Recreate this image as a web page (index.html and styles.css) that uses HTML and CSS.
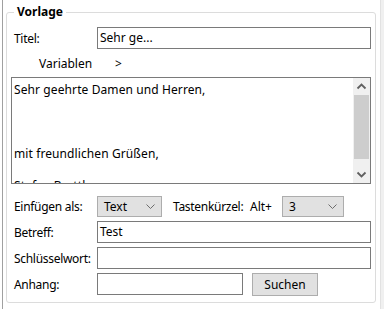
FILE: index.html
```html
<!DOCTYPE html>
<html lang="de">
<head>
  <meta charset="UTF-8">
  <title>Vorlage</title>
  <link rel="stylesheet" href="styles.css">
</head>
<body>
  <div class="window">
    <div class="edge-left"></div>
    <div class="panel">
      <fieldset class="group">
        <legend>Vorlage</legend>

        <div class="row">
          <label>Titel:</label>
          <div class="field">Sehr ge...</div>
        </div>

        <div class="vars">
          <span class="vars-label">Variablen</span>
          <span class="vars-arrow">&gt;</span>
        </div>

        <div class="memo">
          <div class="memo-text">
            Sehr geehrte Damen und Herren,<br><br><br><br>mit freundlichen Grüßen,<br><br>Stefan Brettl
          </div>
          <div class="scrollbar">
            <div class="sb-btn">
              <svg width="17" height="17" viewBox="0 0 17 17"><polyline points="4.5,10.5 8.5,6.5 12.5,10.5" fill="none" stroke="#606060" stroke-width="1.8"/></svg>
            </div>
            <div class="sb-thumb"></div>
            <div class="sb-track"></div>
            <div class="sb-btn">
              <svg width="17" height="17" viewBox="0 0 17 17"><polyline points="4.5,6.5 8.5,10.5 12.5,6.5" fill="none" stroke="#606060" stroke-width="1.8"/></svg>
            </div>
          </div>
        </div>

        <div class="row insert-row">
          <label>Einfügen als:</label>
          <div class="combo combo-kind">
            <span>Text</span>
            <svg width="9" height="5" viewBox="0 0 9 5"><polyline points="0.5,0.5 4.5,4.5 8.5,0.5" fill="none" stroke="#6d6d6d" stroke-width="1"/></svg>
          </div>
          <span class="hotkey-label">Tastenkürzel:</span>
          <span class="alt-label">Alt+</span>
          <div class="combo combo-key">
            <span>3</span>
            <svg width="9" height="5" viewBox="0 0 9 5"><polyline points="0.5,0.5 4.5,4.5 8.5,0.5" fill="none" stroke="#6d6d6d" stroke-width="1"/></svg>
          </div>
        </div>

        <div class="row">
          <label>Betreff:</label>
          <div class="field">Test</div>
        </div>

        <div class="row">
          <label>Schlüsselwort:</label>
          <div class="field"></div>
        </div>

        <div class="row">
          <label>Anhang:</label>
          <div class="field field-short"></div>
          <button class="btn">Suchen</button>
        </div>
      </fieldset>
    </div>
    <div class="edge-right"></div>
  </div>
</body>
</html>
```

FILE: styles.css
```css
* {
  box-sizing: border-box;
}
body {
  margin: 0;
  font-family: "Noto Sans", "Open Sans", sans-serif;
  font-size: 12px;
  color: #000;
  background: #fff;
}
.window {
  display: flex;
  height: 309px;
}
.edge-left {
  width: 3px;
  border-right: 1px solid #a0a0a0;
}
.panel {
  flex: 1;
  padding: 4px 4px 0 3px;
}
.edge-right {
  width: 4px;
  background: #f0f0f0;
  border-left: 1px solid #e2e2e2;
}
.group {
  margin: 0;
  border: 1px solid #dcdcdc;
  border-radius: 3px;
  padding: 7px 4px 7px 4px;
}
.group legend {
  font-weight: bold;
  padding: 0 3px;
  margin-left: 3px;
  line-height: 16px;
}
.row {
  display: flex;
  align-items: center;
  height: 22px;
  margin-top: 4px;
}
.row:first-of-type {
  margin-top: 0;
}
.row label {
  width: 86px;
  padding-left: 3px;
  flex-shrink: 0;
  letter-spacing: -0.3px;
  white-space: nowrap;
}
.field {
  flex: 1;
  height: 22px;
  border: 1px solid #7a7a7a;
  padding-left: 2px;
  line-height: 20px;
}
.field-short {
  flex: none;
  width: 146px;
}
.vars {
  display: flex;
  align-items: center;
  height: 28px;
  padding-left: 28px;
}
.vars-label {
  width: 76px;
}
.memo {
  display: flex;
  height: 107px;
  border: 1px solid #7a7a7a;
  overflow: hidden;
}
.memo-text {
  flex: 1;
  padding: 4px 2px;
  line-height: 16px;
  white-space: nowrap;
  letter-spacing: 0.1px;
}
.scrollbar {
  width: 17px;
  display: flex;
  flex-direction: column;
  background: #f0f0f0;
}
.sb-btn {
  height: 17px;
}
.sb-btn svg {
  display: block;
}
.sb-thumb {
  height: 64px;
  margin: 0 1px;
  background: #cdcdcd;
}
.sb-track {
  flex: 1;
}
.insert-row {
  margin-top: 12px;
  height: 21px;
}
.combo {
  display: flex;
  align-items: center;
  justify-content: space-between;
  height: 21px;
  background: #e1e1e1;
  border: 1px solid #adadad;
  padding: 0 6px 0 6px;
}
.combo-kind {
  width: 65px;
}
.combo-key {
  width: 62px;
}
.hotkey-label {
  margin-left: 11px;
  width: 77px;
  letter-spacing: -0.3px;
  white-space: nowrap;
}
.alt-label {
  width: 32px;
}
.btn {
  margin-left: 9px;
  width: 66px;
  height: 23px;
  background: #e1e1e1;
  border: 1px solid #adadad;
  font: inherit;
  color: #000;
  padding: 0;
}
```
